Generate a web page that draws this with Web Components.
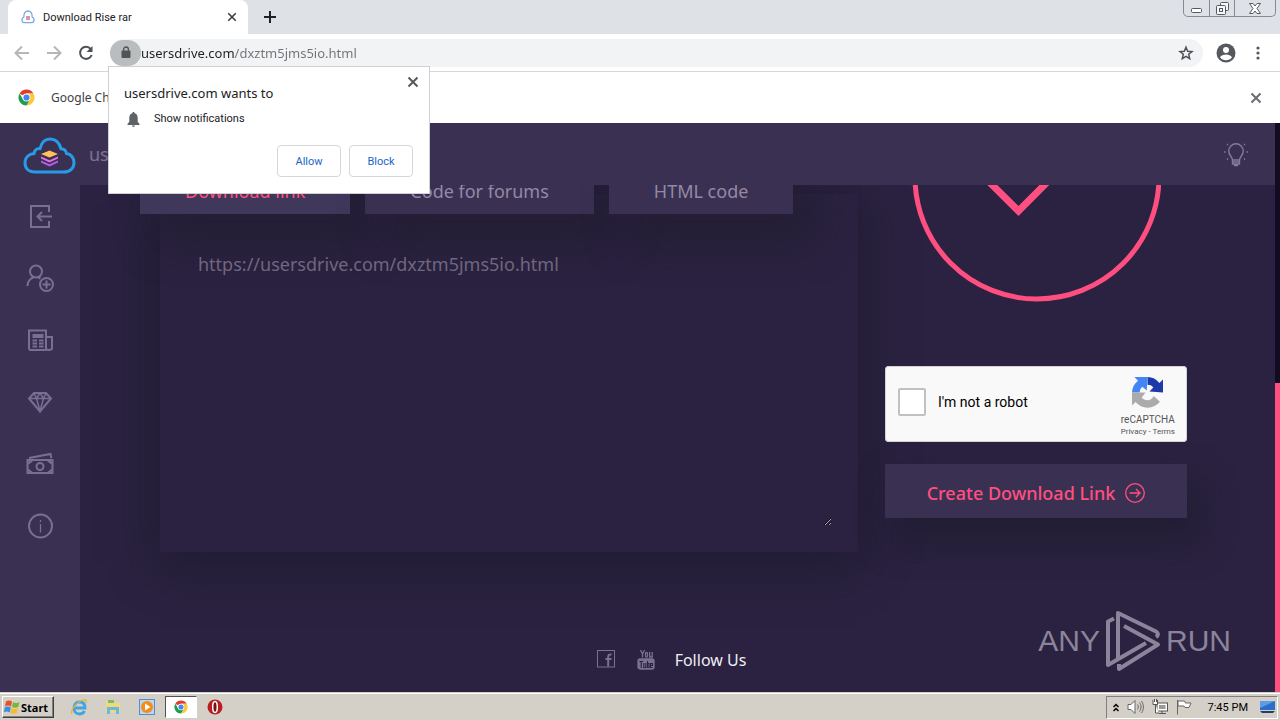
<!DOCTYPE html>
<html lang="en">
<head>
<meta charset="utf-8">
<meta name="viewport" content="width=device-width, initial-scale=1">
<title>Download Rise rar</title>
<style>
body { margin: 0; font-family: "Noto Sans", "Open Sans", sans-serif; }
</style>
</head>
<body>
<desktop-shell>
  <tab-strip><browser-tab>Download Rise rar</browser-tab></tab-strip>
  <browser-toolbar url="usersdrive.com/dxztm5jms5io.html">
    <permission-popup slot="popup" site="usersdrive.com">Show notifications</permission-popup>
  </browser-toolbar>
  <info-bar>Google Ch</info-bar>
  <site-page>
    <site-header slot="header">usersdrive</site-header>
    <side-nav slot="nav"></side-nav>
    <link-panel slot="links" url="https://usersdrive.com/dxztm5jms5io.html"></link-panel>
    <create-column slot="create"></create-column>
    <site-footer slot="footer">Follow Us</site-footer>
    <run-watermark slot="mark"></run-watermark>
  </site-page>
  <task-bar></task-bar>
</desktop-shell>

<script>
const define = (name, markup, ready) => {
  const template = document.createElement('template');
  template.innerHTML = '<style>*{box-sizing:border-box}button{font:inherit;cursor:pointer}svg{display:block;flex:none}</style>' + markup;
  customElements.define(name, class extends HTMLElement {
    constructor() {
      super();
      this.attachShadow({ mode: 'open' }).append(template.content.cloneNode(true));
    }
    connectedCallback() { if (ready) ready(this, this.shadowRoot); }
  });
};

const chrome = `<svg viewBox="0 0 32 32" width="100%" height="100%"><circle cx="16" cy="16" r="15" fill="#fff"/><path d="M16 16L3 8.500A15 15 0 0 1 29 8.500H16z" fill="#e33b2e"/><path d="M16 8.500h13A15 15 0 0 1 16 31l6.500-11.300z" fill="#fcc934"/><path d="M3 8.500A15 15 0 0 0 16 31l6.500-11.300-13 0z" fill="#1e9b4b"/><circle cx="16" cy="16" r="7.400" fill="#fff"/><circle cx="16" cy="16" r="5.800" fill="#4285f4"/></svg>`;
const cross = `<svg width="12" height="12" viewBox="0 0 12 12" fill="none" stroke="currentColor" stroke-width="2"><path d="M1.500 1.500l9 9M10.500 1.500l-9 9"/></svg>`;

define('desktop-shell', `
<style>:host{display:flex;flex-direction:column;min-height:100vh;background:#fff}::slotted(site-page){flex:1}</style>
<slot></slot>`);

define('tab-strip', `
<style>
:host{display:flex;height:34px;padding-left:8px;background:#dee1e6;color:#202124}
button{border:0;background:none;padding:0;display:grid;place-items:center}
.new{width:28px;margin-left:8px}
.win{margin-left:auto;display:flex;height:17px;margin-right:4px;border:1px solid #868a94;border-top:0;border-radius:0 0 5px 5px}
.win button{width:25px}.win button+button{border-left:1px solid #868a94}.win button:last-child{width:41px}
</style>
<slot></slot>
<button class="new" aria-label="New tab"><svg width="12" height="12" viewBox="0 0 12 12" stroke="#202124" stroke-width="2"><path d="M6 0v12M0 6h12"/></svg></button>
<div class="win">
<button aria-label="Minimize"><svg width="13" height="12" viewBox="0 0 13 12"><rect x="1.500" y="6.500" width="10" height="4" rx="1" fill="#fff" stroke="#555962"/></svg></button>
<button aria-label="Restore"><svg width="13" height="13" viewBox="0 0 13 13" fill="#f6f7f9" stroke="#555962"><rect x="4.500" y=".5" width="8" height="8" rx="1"/><rect x=".5" y="3.500" width="9" height="9" rx="1"/><rect x="3.500" y="6.500" width="3" height="3"/></svg></button>
<button aria-label="Close"><svg width="12" height="11" viewBox="0 0 12 11" fill="#fff" stroke="#555962"><path d="M.5.500h3.500l2 2.500L8 .5h3.500L8 5.500l3.500 5H8L6 8l-2 2.500H.5L4 5.500z"/></svg></button>
</div>`);

define('browser-tab', `
<style>
:host{display:flex;align-items:center;width:240px;padding:0 10px 0 13px;background:#fff;border-radius:8px 8px 0 0;font:11px Roboto,"Noto Sans",sans-serif;box-sizing:border-box}
span{flex:1;margin-left:8px;white-space:nowrap}
button{border:0;background:none;padding:0;width:12px;height:12px;color:#3c4043}button svg{width:10px;height:10px;margin:auto}
</style>
<svg width="14" height="14" viewBox="0 0 14 14" fill="none" stroke="#74a9e8" stroke-width="1.300"><path d="M3.500 12.700C1.800 12.700 1 11.500 1 9.800c0-1.400.8-2.300 1.800-2.700C2.600 3.500 4.300 1 7 1s4.400 2.500 4.200 6.100c1 .4 1.800 1.300 1.800 2.700 0 1.700-.8 2.900-2.500 2.900z"/><path d="M5 8h4" stroke="#d59aa6" stroke-width="4"/></svg>
<span><slot></slot></span><button aria-label="Close tab">${cross}</button>`);

define('browser-toolbar', `
<style>
:host{display:flex;align-items:center;position:relative;height:38px;border-bottom:1px solid #d5d7da;padding:0 15px 0 14px;box-sizing:border-box;color:#5f6368}
button{border:0;background:none;padding:0;display:grid;place-items:center}
.nav{display:flex;gap:16px;margin-right:16px}.nav svg{width:16px;height:16px}
.omni{flex:1;display:flex;align-items:center;height:28px;background:#f1f3f4;border-radius:14px;padding-right:9px}
.lock{width:31px;height:26px;background:#b9bdbe;border-radius:13px}
input{flex:1;min-width:0;height:26px;border:0;outline:0;padding:0;font:13px "Noto Sans",sans-serif;color:#3c4043;background:linear-gradient(90deg,#202124 var(--host),#707478 var(--host));-webkit-background-clip:text;background-clip:text;-webkit-text-fill-color:transparent}
.who{margin:0 15px 0 13px}
::slotted([slot=popup]){position:absolute;left:108px;top:32px;z-index:10}
</style>
<div class="nav">
<button aria-label="Back"><svg viewBox="0 0 16 16" fill="none" stroke="#b4b6b9" stroke-width="2"><path d="M15 8H2M8 1.500L1.500 8 8 14.500"/></svg></button>
<button aria-label="Forward"><svg viewBox="0 0 16 16" fill="none" stroke="#b4b6b9" stroke-width="2"><path d="M1 8h13M8 1.500L14.500 8 8 14.500"/></svg></button>
<button aria-label="Reload"><svg viewBox="0 0 16 16"><path d="M12.700 4A6 6 0 1 0 13.700 10" fill="none" stroke="#4d5156" stroke-width="2"/><path d="M14.500 1v6h-6z" fill="#4d5156"/></svg></button>
</div>
<div class="omni">
<button class="lock" aria-label="Site information"><svg width="10" height="13" viewBox="0 0 10 13"><rect x=".5" y="4.500" width="9" height="7.500" rx="1" fill="#505458"/><path d="M2.600 5V3.400a2.400 2.400 0 0 1 4.800 0V5" fill="none" stroke="#505458" stroke-width="1.300"/></svg></button>
<input aria-label="Address" spellcheck="false">
<button aria-label="Bookmark"><svg width="16" height="16" viewBox="0 0 16 16" fill="none" stroke="#4d5156" stroke-width="1.500"><path d="M8 2.200l1.700 4 4.300.3-3.300 2.800 1 4.300L8 11.300l-3.700 2.300 1-4.300L2 6.500l4.300-.3z"/></svg></button>
</div>
<button class="who" aria-label="Profile"><svg width="20" height="20" viewBox="0 0 20 20"><circle cx="10" cy="10" r="9.500" fill="#55595e"/><circle cx="10" cy="7" r="3" fill="#fff"/><path d="M4 14.200c1.200-1.800 3.500-2.700 6-2.700s4.800.9 6 2.700a7.300 7.300 0 0 1-12 0z" fill="#fff"/></svg></button>
<button aria-label="Menu"><svg width="14" height="14" viewBox="0 0 14 14" fill="#55595e"><circle cx="7" cy="2" r="1.600"/><circle cx="7" cy="7" r="1.600"/><circle cx="7" cy="12" r="1.600"/></svg></button>
<slot name="popup"></slot>`, (el, root) => {
  // The host name is darker than the path: measure it to place the colour change.
  const input = root.querySelector('input');
  input.value = el.getAttribute('url');
  const pen = document.createElement('canvas').getContext('2d');
  pen.font = '13px "Noto Sans", sans-serif';
  input.style.setProperty('--host', Math.round(pen.measureText(input.value.split('/')[0]).width) + 'px');
});

define('permission-popup', `
<style>
:host{display:block;width:322px;height:128px;background:#fff;border:1px solid #cfd0d6;box-sizing:border-box;padding:9px 16px 16px 15px;color:#202124}
.top{display:flex;justify-content:space-between}
h2{font-size:13px;line-height:20px;font-weight:400;margin:7px 0 0}
.top button{border:0;background:none;padding:0;height:12px;color:#55595e;margin-right:-6px}
p{display:flex;align-items:center;gap:14px;font:11px/16px Roboto,sans-serif;margin:8px 0 0 3px}
.act{display:flex;justify-content:flex-end;gap:8px;margin-top:18px}
.act button{width:64px;height:32px;border:1px solid #d5d7da;border-radius:4px;background:#fff;color:#1a66c9;font:11px Roboto,sans-serif;padding:0}
</style>
<div class="top"><h2><span id="site"></span> wants to</h2><button aria-label="Close">${cross}</button></div>
<p><svg width="13" height="15" viewBox="0 0 13 15" fill="#5f6368"><path d="M6.500 0c.7 0 1.100.5 1.100 1.200 2 .5 3.100 2.200 3.100 4.500v4L12.500 12v1H.5v-1l1.800-2.300v-4c0-2.300 1.100-4 3.100-4.500C5.400.5 5.800 0 6.500 0zM5 13.600h3c0 .9-.7 1.400-1.500 1.400S5 14.500 5 13.600z"/></svg><slot></slot></p>
<div class="act"><button>Allow</button><button>Block</button></div>`,
(el, root) => { root.getElementById('site').textContent = el.getAttribute('site'); });

define('info-bar', `
<style>:host{display:flex;align-items:center;gap:16px;height:51px;padding:0 18px;font-size:12px;color:#3c4043;background:#fff;box-sizing:border-box;white-space:nowrap}
i{width:17px;height:17px}button{margin-left:auto;border:0;background:none;padding:0;color:#6a6d72}</style>
<i>${chrome}</i><span><slot></slot></span><button aria-label="Dismiss">${cross}</button>`);

define('site-page', `
<style>
:host{display:grid;grid-template-columns:80px minmax(0,1fr) 5px;grid-template-rows:62px 1fr;background:#2a2240;color:#8a819f;position:relative}
header{grid-column:1/3;background:#3a3152}
nav{background:#3a3152}
.track{grid-column:3;grid-row:1/3;background:linear-gradient(#120c22 260px,#ff4f80 260px)}
main{overflow:hidden;display:flex;flex-direction:column;justify-content:space-between}
.row{display:flex;gap:27px;padding:0 88px 0 60px}
::slotted([slot=links]){flex:1;min-width:0}
::slotted([slot=mark]){position:absolute;right:49px;bottom:19px}
</style>
<header><slot name="header"></slot></header>
<nav><slot name="nav"></slot></nav>
<main><div class="row"><slot name="links"></slot><slot name="create"></slot></div><slot name="footer"></slot></main>
<div class="track"></div><slot name="mark"></slot>`);

define('site-header', `
<style>:host{display:flex;align-items:center;height:62px;padding:0 27px 0 23px;box-sizing:border-box;font-size:18px;color:#7d7491}
span{margin-left:13px}svg:first-of-type{margin-top:4px}svg:last-child{margin-left:auto}</style>
<svg width="53" height="38" viewBox="0 0 53 38" fill="none"><path d="M12 35C5.500 35 2 31 2 26 2 20.500 6 17 11 16.500 11.500 13.500 14 11 17 11.500 18.500 5.500 22 2 27 2c6 0 9.500 4 11 9.800 3.300.1 5 2 5.500 4.700 4.500.5 7.500 4.500 7.500 9.200C51 31 47 35 41 35z" stroke="#259bea" stroke-width="3"/><path d="M18 17l8.500-3.500 8.500 3.500-8.500 3.500z" fill="#ffc05d"/><path d="M18 19.500l8.500 3.700 8.500-3.700v2l-8.500 4-8.500-4z" fill="#e070dc"/><path d="M18 23.500l8.500 3.700 8.500-3.700v2l-8.500 4-8.500-4z" fill="#b25df0"/></svg>
<span><slot></slot></span>
<svg width="24" height="26" viewBox="0 0 24 26" fill="none" stroke="#847a9e" stroke-width="1.400"><path d="M8.500 19c0-3-3.800-4.400-3.800-9A7.300 7.300 0 0 1 12 2.800 7.300 7.300 0 0 1 19.300 10c0 4.600-3.800 6-3.800 9zM8.500 19v4h7v-4M8.500 21h7M10 24.500h4M1.500 11H0M24 11h-1.500M4 4L3 3M20 4l1-1M4 17.500L3 18.500M20 17.500l1 1"/></svg>`);

define('side-nav', `
<style>:host{display:flex;flex-direction:column;align-items:center;gap:34px;padding-top:17px}
a{display:grid;place-items:center;width:32px;height:28px;color:#796f93}svg{fill:none;stroke:currentColor;stroke-width:2}</style>
<a href="#login" aria-label="Log in"><svg width="28" height="28" viewBox="0 0 28 28"><path d="M23 10V4H5v21h18v-6M26 14.500H12M16 10l-4.500 4.500L16 19"/></svg></a>
<a href="#join" aria-label="Sign up"><svg width="28" height="28" viewBox="0 0 28 28"><circle cx="10" cy="7.500" r="6"/><path d="M1.500 22C1.500 18 4 14.500 7.500 13.500M12.500 13.500l2 1"/><circle cx="20.500" cy="20.500" r="6.500"/><path d="M20.500 16.500v8M16.500 20.500h8"/></svg></a>
<a href="#news" aria-label="News"><svg width="28" height="28" viewBox="0 0 28 28"><path d="M20 24H4.500C3 24 3 23 3 22V4.500h17V22c0 2.700 6 2.700 6 0V11h-6M6.500 14.500H11M13 14.500h4.500M6.500 17.500H11M13 17.500h4.500M6.500 20.500H11M13 20.500h4.500"/><path d="M6.500 10h11" stroke-width="4"/></svg></a>
<a href="#premium" aria-label="Premium"><svg width="28" height="28" viewBox="0 0 28 28"><path d="M8 5h12l5 5.500L14 23.500 3 10.500z"/><path d="M3 10.500h22M8 5l2.500 5.500L14 23l3.500-12.500L20 5M10.500 10.500L14 5l3.500 5.500" stroke-width="1.500"/></svg></a>
<a href="#earn" aria-label="Earn money"><svg width="28" height="28" viewBox="0 0 28 28"><path d="M1.500 10h25v13h-25zM3 8l21.500-4 .8 4"/><circle cx="14" cy="16.500" r="3.500"/><path d="M2 13.500l4-3M26 13.500l-4-3M2 19.500L6 23M26 19.500L22 23" stroke-width="2.200"/></svg></a>
<a href="#about" aria-label="About"><svg width="28" height="28" viewBox="0 0 28 28"><circle cx="14.500" cy="14" r="11.500"/><path d="M14.500 12v8.500M14.500 8v2" stroke-width="1.300"/></svg></a>`);

define('link-panel', `
<style>
:host{display:block;margin-top:-25px}
.tabs{display:flex;gap:15px;position:relative;z-index:1}
.tabs button{height:54px;padding:8px 45px 0;border:0;background:#3a3152;color:#9389a6;font-size:18px;white-space:nowrap;box-shadow:20px 25px 40px rgba(27,25,40,.5)}
.tabs button[aria-selected=true]{color:#ff4f80;background:#3f385a}
.box{margin:-20px 0 0 20px;height:358px;padding:37px 26px 26px;background:#2a2240;box-shadow:0 12px 44px rgba(24,24,38,.6)}
textarea{display:block;width:100%;height:100%;border:0;outline:0;padding:19px 12px;background:none;color:#70677f;font:18px/28px "Noto Sans",sans-serif;position:relative;z-index:2;resize:vertical}
</style>
<div class="tabs" role="tablist"><button role="tab" aria-selected="true">Download link</button><button role="tab">Code for forums</button><button role="tab">HTML code</button></div>
<div class="box"><textarea aria-label="Download link" spellcheck="false"></textarea></div>`,
(el, root) => { root.querySelector('textarea').value = el.getAttribute('url'); });

define('create-column', `
<style>
:host{display:flex;flex-direction:column;width:302px;flex:none;margin-top:-133px}
.done{align-self:center}
.cap{display:flex;align-items:center;height:76px;margin-top:64px;padding:0 11px 0 12px;background:#f9f9f9;border:1px solid #d3d3d3;border-radius:3px;font-family:Roboto,sans-serif;color:#000;position:relative;z-index:1}
label{display:flex;align-items:center;gap:12px;font-size:14px;margin-bottom:4px}
input{appearance:none;width:28px;height:28px;margin:0;border:2px solid #c1c1c1;border-radius:2px;background:#fff}
.brand{margin-left:auto;display:flex;flex-direction:column;align-items:center;font-size:10px;line-height:13px;padding-top:6px;color:#555}.brand svg{margin-bottom:5px}
.brand small{font-size:8px;line-height:12px}a{color:inherit;text-decoration:none}
.go{display:flex;align-items:center;justify-content:center;gap:10px;height:54px;margin-top:22px;border:0;background:#3a3152;color:#ff4f80;font-size:18px;font-weight:500;padding:3px 0 0;white-space:nowrap;box-shadow:10px 20px 36px rgba(24,24,38,.5)}
</style>
<svg class="done" width="250" height="250" viewBox="0 0 250 250" fill="none" stroke="#ff4f80"><circle cx="126" cy="125" r="122" stroke-width="5"/><path d="M49 101l58.500 58L186 80" stroke-width="7"/></svg>
<div class="cap"><label><input type="checkbox">I'm not a robot</label>
<div class="brand"><svg width="31" height="31" viewBox="0 0 64 64"><path d="M64 32V5l-7.500 7.500A32 32 0 0 0 32 0v16c5 0 9 1.500 12 5.500L36 30z" fill="#1c3aa9"/><path d="M32 0H5l7.500 7.500A32 32 0 0 0 0 32h16c0-5 1.500-9 5.500-12l9 8z" fill="#4285f4"/><path d="M0 32v27l7.500-7.500A32 32 0 0 0 57.500 51L45 39c-3 5.500-8 9-13 9-5 0-9-1.500-12-5.500L28 32z" fill="#ababab"/></svg>
<span>reCAPTCHA</span><small><a href="#privacy">Privacy</a> - <a href="#terms">Terms</a></small></div></div>
<button class="go">Create Download Link<svg width="20" height="20" viewBox="0 0 20 20" fill="none" stroke="currentColor" stroke-width="1.300"><circle cx="10" cy="10" r="9.300"/><path d="M4.500 10h10.500M11 6l4 4-4 4"/></svg></button>`);

define('site-footer', `
<style>:host{display:flex;align-items:center;justify-content:center;gap:22px;height:64px;padding-right:12px;font-size:16px;color:#f0edf5}a{color:#7a7091}span{margin-left:-2px}svg{width:18px;height:20px}</style>
<a href="#facebook" aria-label="Facebook"><svg viewBox="0 0 18 20" fill="none" stroke="currentColor"><rect x=".5" y=".5" width="17" height="16.500"/><path d="M11.200 16.500V7c0-2 1-2.700 3.300-2.500M8.500 9h6" stroke-width="2"/></svg></a>
<a href="#youtube" aria-label="YouTube"><svg viewBox="0 0 18 20" fill="none" stroke="currentColor" stroke-width="1.300"><path d="M3.500 0l2 4v3.500M7.500 0l-2 4"/><rect x="8.500" y="2.500" width="2" height="4.500" rx="1"/><path d="M12.700 2v5h2.500V2"/><rect x="1" y="9" width="16" height="10" rx="2" fill="currentColor"/><g stroke="#2a2240" stroke-width="1.100"><path d="M2.500 11.500h3.500M4.200 11.500V18M6.800 13v4.500h2V13M10.500 11v7M10.500 13.500h1.500v4h-1.500M15.500 15.500h-2v-2h2zM13.500 15v2.500h2"/></g></svg></a>
<span><slot></slot></span>`);

define('run-watermark', `
<style>:host{display:flex;align-items:center;gap:5px;color:#8b849a;font:30px/44px "Liberation Sans",sans-serif}</style>
<span>ANY</span>
<svg width="56" height="64" viewBox="0 0 56 64" fill="none" stroke="currentColor" stroke-width="4" stroke-linejoin="round"><path d="M9 9.500L3 12.500V56l38-22M51 28c3-2 2-4 0-5.500L13 4v45M19 17l34 18.500L14 60v-5"/></svg>
<span>RUN</span>`);

define('task-bar', `
<style>
:host{display:flex;align-items:center;height:28px;background:#d4d0c8;border-top:1px solid #d4d0c8;box-shadow:inset 0 1px #fff;padding:1px 2px 0;box-sizing:border-box;font:11px Roboto,"Noto Sans",sans-serif;color:#000}
button{border:0;background:none;padding:0;display:grid;place-items:center}
.start{display:flex;align-items:center;gap:1px;height:22px;width:52px;padding:0 1px;background:#d4d0c8;border:1px solid;border-color:#fff #404040 #404040 #fff;box-shadow:inset -1px -1px #808080;font:bold 11px "Noto Sans",sans-serif}
.quick{display:flex;margin-left:9px;gap:2px}.quick button{width:32px;height:22px}
.quick .on{background:#fff;border:1px solid;border-color:#505050 #fff #fff #505050}
.tray{display:flex;align-items:center;gap:8px;margin-left:auto;height:23px;padding:0 2px 0 6px;border:1px solid;border-color:#808080 #fff #fff #808080}
time{margin:0 4px 0 8px}
</style>
<button class="start"><svg width="16" height="16" viewBox="0 0 16 16"><path d="M2 2.500C4 1 6 1.200 8 2.500L7 7.500C5 6.300 3 6.200 1 7.500z" fill="#e8502a"/><path d="M9 3c2 1.200 4 1.200 6.500 0l-1.300 5C12 9 10 9 8 8z" fill="#77b835"/><path d="M.8 8.500c2-1.300 4-1.200 6 0l-1 5c-2-1.200-4-1.300-6 0z" fill="#3e8ddd"/><path d="M7.700 9c2 1.200 4 1.200 6.300 0l-1.200 5c-2 1-4 1.200-6.200 0z" fill="#f7bd29"/></svg>Start</button>
<div class="quick">
<button aria-label="Internet Explorer"><svg width="18" height="18" viewBox="0 0 18 18" fill="none"><path d="M4 10h11c0-4-2-6-5.500-6S4 6.500 4 10s2 6 5.500 6c2.300 0 4-1 5-3" stroke="#3fa5e4" stroke-width="2.800"/><path d="M2 16C0 13 6 4 13 2c3-.8 4 .5 3 3" stroke="#e8b431" stroke-width="1.300"/></svg></button>
<button aria-label="Explorer"><svg width="16" height="16" viewBox="0 0 16 16"><path d="M1 2h5l1 2h8v9H1z" fill="#f0d979"/><path d="M3 1h6v3H3z" fill="#7dbb64"/><path d="M2 15V8h12v7h-3v-4H5v4z" fill="#68b9df"/></svg></button>
<button aria-label="Media Player"><svg width="16" height="16" viewBox="0 0 16 16"><rect x=".5" y=".5" width="15" height="15" fill="#b8d7f0" stroke="#568fc7"/><circle cx="8" cy="8" r="6" fill="#f58b18"/><path d="M6 4.500L11.500 8 6 11.500z" fill="#fff"/></svg></button>
<button class="on" aria-label="Chrome"><svg width="14" height="14">${chrome}</svg></button>
<button aria-label="Opera"><svg width="16" height="16" viewBox="0 0 16 16"><circle cx="8" cy="8" r="7.500" fill="#b81d20"/><ellipse cx="8" cy="8" rx="2.300" ry="5.500" fill="#7d1013" stroke="#fff" stroke-width="1.500"/></svg></button>
</div>
<div class="tray">
<button aria-label="Show hidden icons"><svg width="6" height="9" viewBox="0 0 6 9" fill="none" stroke="#000" stroke-width="1.500"><path d="M.5 4L3 1.500 5.500 4M.5 8L3 5.500 5.500 8"/></svg></button>
<button aria-label="Volume"><svg width="17" height="16" viewBox="0 0 17 16" fill="#fff" stroke="#666"><path d="M1 5.500h3L8 1.500v13l-4-4H1z"/><path d="M10.500 5.500c1 1.500 1 3.500 0 5M12.500 3.500c2 2.500 2 6.500 0 9M14.500 2c2.500 3.500 2.500 8.500 0 12" fill="none"/></svg></button>
<button aria-label="Network"><svg width="16" height="16" viewBox="0 0 16 16" fill="#fff" stroke="#555"><rect x="5" y="4" width="10.500" height="8"/><rect x="7" y="6" width="6.500" height="4" fill="#999" stroke="none"/><path d="M7 14.500h7M10 12v2.500M3.500 6v8H7"/><path d="M1 1v4.500h4.500V1M2.500 0v3M4.500 0v3"/></svg></button>
<button aria-label="Action Center"><svg width="16" height="16" viewBox="0 0 16 16" fill="#fff" stroke="#666"><path d="M1.500 1v14.500M2 2h6.500l1 2H15l-2 4.500H9L8 7H2z"/></svg></button>
<time>7:45 PM</time>
<button aria-label="Show desktop"><svg width="15" height="14" viewBox="0 0 15 14"><path d="M0 1h15v9H0z" fill="#2d6ecb"/><path d="M0 1h15L0 8z" fill="#5d9ce6"/><path d="M0 11h15l-2 2H2z" fill="#243e6b"/></svg></button>
</div>`);
</script>
</body>
</html>
